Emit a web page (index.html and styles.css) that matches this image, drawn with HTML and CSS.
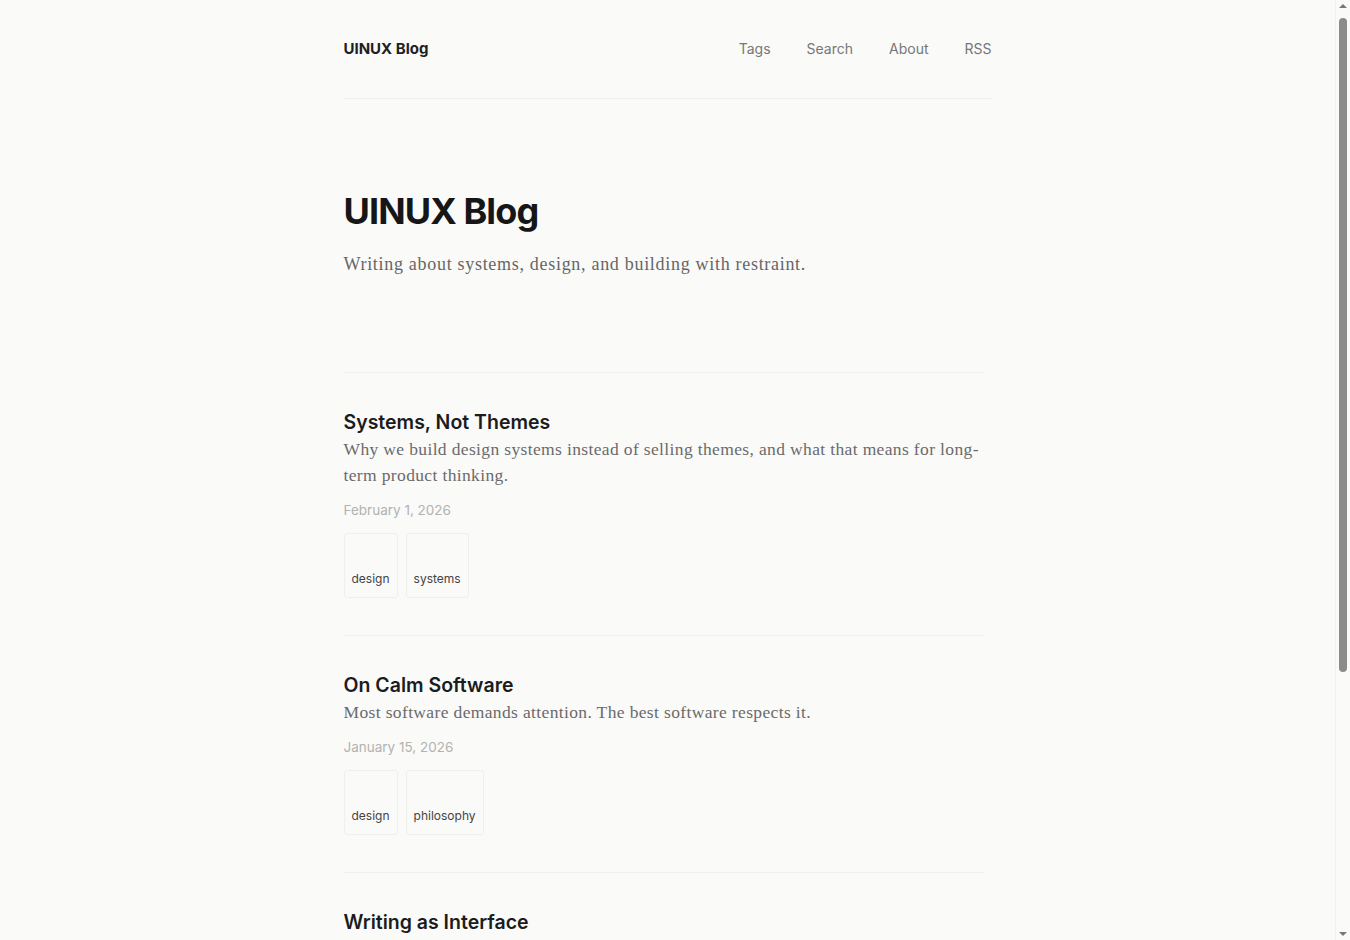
FILE: index.html
```html
<!DOCTYPE html>
<html lang="en">
<head>
<meta charset="utf-8">
<title>UINUX Blog</title>
<link rel="stylesheet" href="styles.css">
</head>
<body>
<div class="container">
  <header class="site-header">
    <a class="brand" href="#">UINUX Blog</a>
    <nav class="nav">
      <a href="#">Tags</a>
      <a href="#">Search</a>
      <a href="#">About</a>
      <a href="#">RSS</a>
    </nav>
  </header>

  <section class="hero">
    <h1 class="hero-title">UINUX Blog</h1>
    <p class="hero-sub">Writing about systems, design, and building with restraint.</p>
  </section>

  <main class="posts">
    <article class="post">
      <h2 class="post-title"><a href="#">Systems, Not Themes</a></h2>
      <p class="post-desc">Why we build design systems instead of selling themes, and what that means for long-term product thinking.</p>
      <div class="post-date">February 1, 2026</div>
      <div class="tags">
        <a class="tag" href="#">design</a>
        <a class="tag" href="#">systems</a>
      </div>
    </article>
    <article class="post">
      <h2 class="post-title"><a href="#">On Calm Software</a></h2>
      <p class="post-desc">Most software demands attention. The best software respects it.</p>
      <div class="post-date">January 15, 2026</div>
      <div class="tags">
        <a class="tag" href="#">design</a>
        <a class="tag" href="#">philosophy</a>
      </div>
    </article>
    <article class="post">
      <h2 class="post-title"><a href="#">Writing as Interface</a></h2>
      <p class="post-desc">Words are the first interface people meet. Treat them with the same care as pixels.</p>
      <div class="post-date">January 2, 2026</div>
      <div class="tags">
        <a class="tag" href="#">writing</a>
        <a class="tag" href="#">design</a>
      </div>
    </article>
  </main>

  <footer class="site-footer">
    <span>© 2026 UINUX Blog</span>
  </footer>
</div>

<div class="scrollbar" aria-hidden="true">
  <span class="sb-arrow sb-up"></span>
  <span class="sb-thumb"></span>
  <span class="sb-arrow sb-down"></span>
</div>
</body>
</html>
```
FILE: styles.css
```css
html, body {
  margin: 0;
  padding: 0;
}
body {
  background: #fafaf9;
  color: #1a1a1a;
  font-family: Inter, "Liberation Sans", sans-serif;
  padding-right: 15px;
}
a {
  color: inherit;
  text-decoration: none;
}
.container {
  width: 648px;
  margin: 0 auto;
}
.site-header {
  display: flex;
  align-items: center;
  justify-content: space-between;
  padding: 38px 0 38px;
  border-bottom: 1px solid #efefec;
  line-height: 22px;
}
.brand {
  font-size: 15px;
  font-weight: 700;
  color: #1f1f1f;
}
.nav {
  display: flex;
  gap: 36px;
}
.nav a {
  font-size: 14px;
  color: #777;
}
.hero {
  padding: 91px 0 94px;
}
.hero-title {
  margin: 0;
  font-size: 36px;
  line-height: 43px;
  font-weight: 700;
  letter-spacing: -0.025em;
  color: #161616;
}
.hero-sub {
  margin: 17px 0 0;
  font-family: "Liberation Serif", serif;
  font-size: 18px;
  line-height: 28px;
  letter-spacing: 0.7px;
  color: #666;
}
.posts {
  width: 640px;
}
.post {
  border-top: 1px solid #efefec;
  padding: 36px 0 37px;
}
.post-title {
  margin: 0;
  font-size: 19.5px;
  line-height: 26px;
  font-weight: 600;
  color: #1c1c1c;
}
.post-desc {
  margin: 1px 0 0;
  font-family: "Liberation Serif", serif;
  font-size: 17.5px;
  line-height: 26px;
  letter-spacing: 0.36px;
  color: #6a6a6a;
}
.post-date {
  margin-top: 12px;
  font-size: 13.5px;
  line-height: 20px;
  color: #b2b2b0;
}
.tags {
  display: flex;
  gap: 8px;
  margin-top: 13px;
}
.tag {
  display: block;
  padding: 37px 7px 10px;
  border: 1px solid #efefec;
  border-radius: 3px;
  font-size: 12px;
  line-height: 16px;
  color: #444;
}
.site-footer {
  border-top: 1px solid #efefec;
  padding: 40px 0 120px;
  font-size: 13px;
  color: #999;
}
.scrollbar {
  position: fixed;
  top: 0;
  right: 0;
  width: 15px;
  height: 100%;
  background: #fafaf9;
  border-left: 1px solid #f0f0ee;
  box-sizing: border-box;
}
.sb-thumb {
  position: absolute;
  top: 18px;
  left: 3px;
  width: 8px;
  height: 654px;
  border-radius: 4px;
  background: #8b8b8b;
}
.sb-arrow {
  position: absolute;
  left: 3px;
  width: 0;
  height: 0;
  border-left: 4px solid transparent;
  border-right: 4px solid transparent;
}
.sb-up {
  top: 4px;
  border-bottom: 4px solid #777;
}
.sb-down {
  bottom: 4px;
  border-top: 4px solid #777;
}
```
